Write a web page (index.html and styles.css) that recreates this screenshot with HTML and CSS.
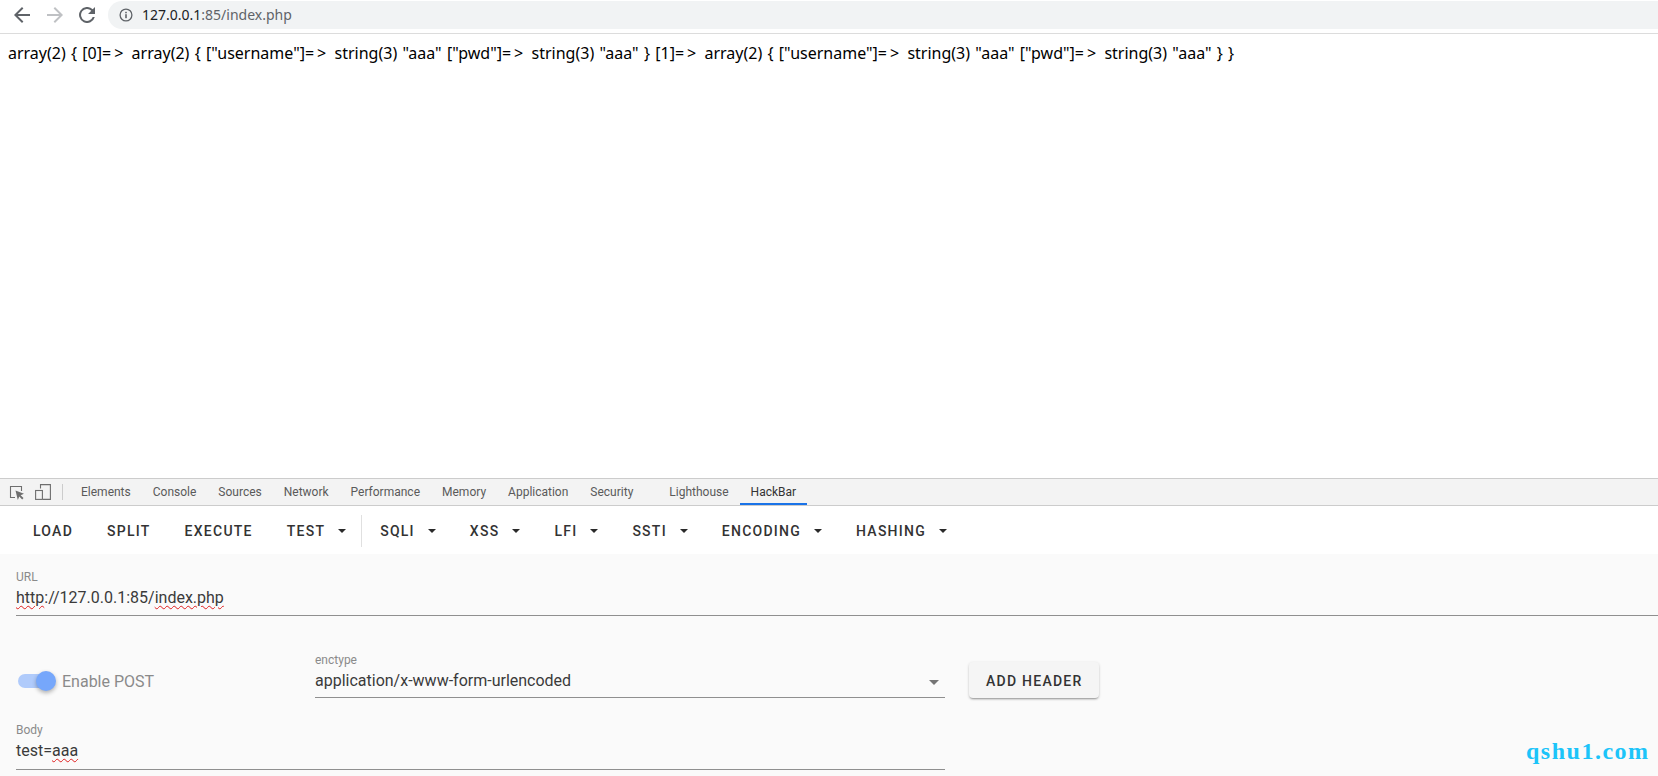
FILE: index.html
```html
<!DOCTYPE html>
<html lang="en">
<head>
<meta charset="utf-8">
<title>127.0.0.1:85/index.php</title>
<link rel="stylesheet" href="styles.css">
</head>
<body>
<div class="app">
  <header class="chrome">
    <svg class="nav nav-back" viewBox="0 0 16 16"><path d="M16 7H3.800l5.600-5.600L8 0 0 8l8 8 1.400-1.400L3.800 9H16z"/></svg>
    <svg class="nav nav-forward" viewBox="0 0 16 16"><path d="M0 7h12.200L6.600 1.400 8 0l8 8-8 8-1.400-1.400L12.200 9H0z"/></svg>
    <svg class="nav nav-reload" viewBox="0 0 16 16"><path d="M13.700 2.300A8 8 0 1 0 15.800 10h-2.100a6 6 0 1 1-1.400-6.300L9 7h7V0z"/></svg>
    <div class="omnibox">
      <svg class="info" viewBox="0 0 14 14"><circle cx="7" cy="7" r="5.900"/><rect class="info-mark" x="6.200" y="6.200" width="1.600" height="4"/><rect class="info-mark" x="6.200" y="3.800" width="1.600" height="1.500"/></svg>
      <span class="host">127.0.0.1</span><span class="path">:85/index.php</span>
    </div>
  </header>
  <main class="page">array(2) { [0]<span class="arrow">=&gt;</span> array(2) { ["username"]<span class="arrow">=&gt;</span> string(3) "aaa" ["pwd"]<span class="arrow">=&gt;</span> string(3) "aaa" } [1]<span class="arrow">=&gt;</span> array(2) { ["username"]<span class="arrow">=&gt;</span> string(3) "aaa" ["pwd"]<span class="arrow">=&gt;</span> string(3) "aaa" } }</main>
  <section class="devtools">
    <nav class="tabs">
      <svg class="dt-icon dt-inspect" viewBox="0 0 16 16"><path class="dt-line" d="M6 13.500H1.500v-11h11V7"/><path class="dt-fill" d="M6.500 6.500l8.500 3.200-3.400 1.500 2.900 2.900-1.300 1.300-2.900-2.900-1.500 3.400z"/></svg>
      <svg class="dt-icon dt-device" viewBox="0 0 16 16"><path class="dt-line" d="M5.500 4.500V.6h9.900v14.800H8"/><rect class="dt-line" x="0.600" y="6.500" width="6.800" height="8.900"/></svg>
      <span class="tabs-sep"></span>
      <span class="tab">Elements</span>
      <span class="tab">Console</span>
      <span class="tab">Sources</span>
      <span class="tab">Network</span>
      <span class="tab">Performance</span>
      <span class="tab">Memory</span>
      <span class="tab">Application</span>
      <span class="tab">Security</span>
      <span class="tab tab-wide">Lighthouse</span>
      <span class="tab tab-active">HackBar</span>
    </nav>
    <div class="toolbar">
      <button class="tb">LOAD</button>
      <button class="tb">SPLIT</button>
      <button class="tb">EXECUTE</button>
      <button class="tb">TEST<i class="caret"></i></button>
      <span class="tb-sep"></span>
      <button class="tb">SQLI<i class="caret"></i></button>
      <button class="tb">XSS<i class="caret"></i></button>
      <button class="tb">LFI<i class="caret"></i></button>
      <button class="tb">SSTI<i class="caret"></i></button>
      <button class="tb">ENCODING<i class="caret"></i></button>
      <button class="tb">HASHING<i class="caret"></i></button>
    </div>
    <form class="form">
      <div class="field field-url">
        <div class="label">URL</div>
        <div class="value"><span class="typo">http</span>://127.0.0.1:85/<span class="typo">index.php</span></div>
      </div>
      <div class="row">
        <div class="switch">
          <span class="track"><span class="thumb"></span></span>
          <span class="switch-label">Enable POST</span>
        </div>
        <div class="field field-select">
          <div class="label">enctype</div>
          <div class="value value-select">application/x-www-form-urlencoded<i class="select-caret"></i></div>
        </div>
        <button type="button" class="add">ADD HEADER</button>
      </div>
      <div class="field field-body">
        <div class="label">Body</div>
        <div class="value">test=<span class="typo">aaa</span></div>
      </div>
    </form>
  </section>
  <div class="watermark">qshu1.com</div>
</div>
</body>
</html>
```

FILE: styles.css
```css
* { box-sizing: border-box; }
html, body { margin: 0; height: 100%; overflow: hidden; background: #fff; }
.app { position: relative; display: flex; flex-direction: column; width: 1658px; height: 776px; overflow: hidden; }

.chrome { display: flex; align-items: center; height: 34px; flex: none; border-bottom: 1px solid #dcdcdc; padding: 0 0 3px 14px; }
.nav { width: 16px; height: 16px; flex: none; }
.nav-back { fill: #5f6368; margin-right: 17px; }
.nav-forward { fill: #bfc1c4; margin-right: 16px; }
.nav-reload { fill: #5f6368; margin-right: 13px; }
.omnibox { flex: 1; display: flex; align-items: center; height: 28px; background: #f1f3f4; border-radius: 14px 0 0 14px; padding-left: 11px; font: 14px/28px "Noto Sans", "Liberation Sans", sans-serif; }
.info { width: 14px; height: 14px; margin-right: 9px; fill: none; stroke: #5f6368; stroke-width: 1.300; }
.info-mark { fill: #5f6368; stroke: none; }
.host { color: #202124; }
.path { color: #5f6368; }

.page { flex: 1; padding: 8px 8px 0; font: 16px/22px "Noto Sans", "Liberation Sans", sans-serif; word-spacing: 1.100px; color: #000; white-space: nowrap; }
.arrow { letter-spacing: 3px; }

.devtools { flex: none; display: flex; flex-direction: column; height: 298px; }
.tabs { display: flex; align-items: center; height: 28px; flex: none; background: #f3f3f3; border-top: 1px solid #ccc; border-bottom: 1px solid #ccc; padding-left: 9px; font: 12px/26px Roboto, sans-serif; color: #5a5a5a; }
.dt-icon { width: 16px; height: 16px; flex: none; }
.dt-line { fill: none; stroke: #6e6e6e; stroke-width: 1.100; }
.dt-fill { fill: #6e6e6e; }
.dt-inspect { margin-right: 10px; }
.tabs-sep { width: 1px; height: 16px; background: #ccc; margin: 0 7px 0 11px; flex: none; }
.tab { padding: 0 11px; height: 26px; white-space: nowrap; }
.tab-wide { margin-left: 14px; }
.tab-active { color: #333; box-shadow: inset 0 -2px 0 #1a73e8; }

.toolbar { display: flex; align-items: center; height: 48px; flex: none; background: #fff; padding: 2px 0 0 16px; }
.tb { display: inline-flex; align-items: center; height: 36px; padding: 0 17px; border: 0; background: none; font: 500 14px/36px Roboto, sans-serif; letter-spacing: 1.250px; color: #333; white-space: nowrap; }
.caret { width: 0; height: 0; margin-left: 13px; border: 4px solid transparent; border-top-color: #2a2a2a; border-bottom: 0; }
.tb-sep { width: 1px; height: 32px; background: #e0e0e0; flex: none; margin: 0 1px 0 -2px; }

.form { flex: 1; background: #fafafa; padding: 15px 0 0 16px; font-family: Roboto, sans-serif; }
.field { border-bottom: 1px solid #8f8f8f; height: 48px; }
.field-url { height: 47px; }
.label { font-size: 12px; line-height: 16px; color: #8a8a8a; }
.value { font-size: 16px; line-height: 24px; margin-top: 1px; color: #3a3a3a; }
.typo { text-decoration: underline wavy #e02020 1px; text-underline-offset: 2px; }
.row { display: flex; align-items: flex-start; margin-top: 36px; height: 46px; }
.switch { display: flex; align-items: center; width: 299px; margin-top: 1px; padding-left: 2px; height: 56px; }
.track { position: relative; display: block; width: 36px; height: 14px; border-radius: 7px; background: #b0cbfb; flex: none; }
.thumb { position: absolute; right: -2px; top: -3px; width: 20px; height: 20px; border-radius: 50%; background: #76a7fb; box-shadow: 0 2px 4px rgba(0,0,0,.3); }
.switch-label { margin-left: 8px; font-size: 16px; color: #8a8a8a; }
.field-select { width: 630px; height: 46px; flex: none; }
.value-select { display: flex; justify-content: space-between; align-items: center; padding-right: 6px; }
.select-caret { width: 0; height: 0; border: 5px solid transparent; border-top-color: #757575; border-bottom: 0; margin-top: 2px; }
.add { width: 130px; height: 36px; margin: 10px 0 0 24px; padding-left: 17px; text-align: left; border: 0; border-radius: 4px; background: #f5f5f5; box-shadow: 0 2px 2px -1px rgba(0,0,0,.3), 0 1px 3px rgba(0,0,0,.18); font: 500 14px/36px Roboto, sans-serif; letter-spacing: 1.250px; color: #333; }
.field-body { width: 929px; margin-top: 24px; }

.watermark { position: absolute; left: 1526px; top: 734px; font: bold 24px/34px "Liberation Serif", serif; letter-spacing: 1.500px; color: #1cc4f9; }
```
